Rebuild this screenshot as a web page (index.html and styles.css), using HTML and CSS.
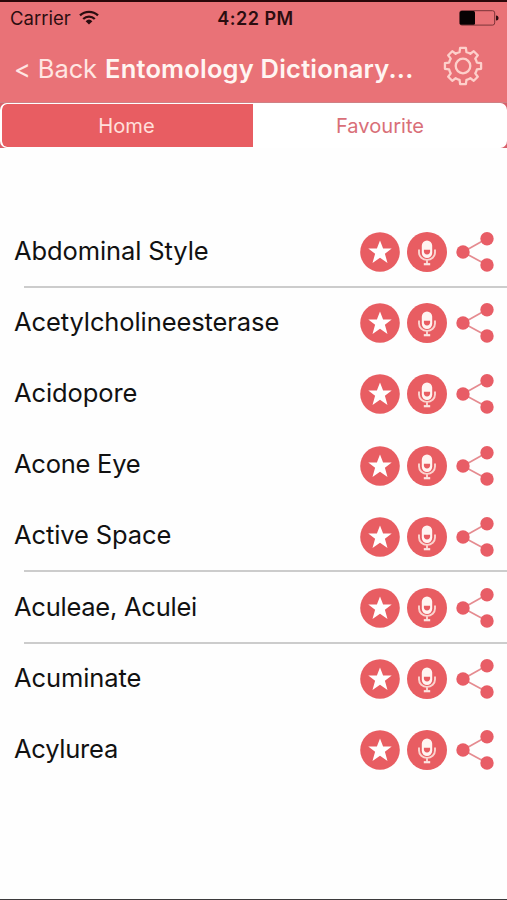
FILE: index.html
```
<!DOCTYPE html>
<html lang="en">
<head>
<meta charset="utf-8">
<title>Entomology Dictionary</title>
<link rel="stylesheet" href="styles.css">
</head>
<body>
<svg class="sprite" aria-hidden="true">
  <symbol id="star" viewBox="0 0 40 40">
    <circle cx="20" cy="20" r="19.8" fill="#e85d62"/>
    <path d="M20 8.6l3.100 8h8.600l-6.800 5.200 2.600 9.200-7.500-5.300-7.500 5.300 2.600-9.200-6.800-5.200h8.600z" fill="#fff"/>
  </symbol>
  <symbol id="mic" viewBox="0 0 40 40">
    <circle cx="20" cy="20" r="20" fill="#e85d62"/>
    <rect x="14.8" y="8.5" width="10.4" height="17.500" rx="5.2" fill="#fff4f1"/>
    <path d="M16.900 17.800h6.200v1.500a3.100 3.100 0 0 1-6.200 0z" fill="#e85d62"/>
    <path d="M12 17.500v3a8 7.400 0 0 0 16 0v-3M20 27.7v4" fill="none" stroke="#fbd5d0" stroke-width="1.9"/>
    <path d="M16.800 32.200h6.400" stroke="#fbe5e1" stroke-width="2.200"/>
  </symbol>
  <symbol id="share" viewBox="0 0 40 42">
    <path d="M31 7.5L7 21l24 13" fill="none" stroke="#e58b90" stroke-width="1.7"/>
    <circle cx="31" cy="7.7" r="6.7" fill="#e85d66"/>
    <circle cx="7" cy="21" r="6.7" fill="#e85d66"/>
    <circle cx="31" cy="34" r="6.7" fill="#e85d66"/>
  </symbol>
</svg>
<div class="screen">
  <header class="header">
    <div class="status">
      <div class="carrier"><span>Carrier</span>
        <svg class="wifi" viewBox="0 0 20 15"><g fill="none" stroke="#2b0d10" stroke-width="2.3"><path d="M1 5.4a13 13 0 0 1 18 0"/><path d="M4.2 9a8.3 8.3 0 0 1 11.6 0"/></g><path d="M6.6 11.2a5 5 0 0 1 6.8 0L10 14.6z" fill="#2b0d10"/></svg>
      </div>
      <div class="time">4:22 PM</div>
      <svg class="battery" viewBox="0 0 40 16"><rect x=".7" y=".7" width="35" height="14.4" rx="2.2" fill="none" stroke="#7b3438" stroke-width="1"/><rect x=".8" y="1" width="15.2" height="13.8" rx="1.5" fill="#080203"/><path d="M37 5.5q2.5 0 2.5 2.5T37 10.5z" fill="#2b0d10"/></svg>
    </div>
    <nav class="nav">
      <span class="back">&lt; Back</span>
      <h1 class="title">Entomology Dictionary...</h1>
      <svg class="gear" viewBox="-20 -20 40 40" fill="none" stroke="#fdd0cb" stroke-width="2.3" stroke-linejoin="round"><path d="M-2.86-18.07H2.86L3.46-13.88Q5.5-13.4 7.37-12.26L10.76-14.8L14.8-10.76L12.26-7.37Q13.4-5.5 13.88-3.46L18.07-2.86V2.86L13.88 3.46Q13.4 5.5 12.26 7.37L14.8 10.76L10.76 14.8L7.37 12.26Q5.5 13.4 3.46 13.88L2.86 18.07H-2.86L-3.46 13.88Q-5.5 13.4-7.37 12.26L-10.76 14.8L-14.8 10.76L-12.26 7.37Q-13.4 5.5-13.88 3.46L-18.07 2.86V-2.86L-13.88-3.46Q-13.4-5.5-12.26-7.37L-14.8-10.76L-10.76-14.8L-7.37-12.26Q-5.5-13.4-3.46-13.88Z"/><circle r="7.3"/></svg>
    </nav>
  </header>
  <div class="tabs-wrap">
    <div class="tabs">
      <div class="tab active">Home</div>
      <div class="tab">Favourite</div>
    </div>
  </div>
  <ul class="list">
    <li class="row line"><span class="word">Abdominal Style</span><svg class="round"><use href="#star"/></svg><svg class="round"><use href="#mic"/></svg><svg class="share"><use href="#share"/></svg></li>
    <li class="row"><span class="word">Acetylcholineesterase</span><svg class="round"><use href="#star"/></svg><svg class="round"><use href="#mic"/></svg><svg class="share"><use href="#share"/></svg></li>
    <li class="row"><span class="word">Acidopore</span><svg class="round"><use href="#star"/></svg><svg class="round"><use href="#mic"/></svg><svg class="share"><use href="#share"/></svg></li>
    <li class="row"><span class="word tight">Acone Eye</span><svg class="round"><use href="#star"/></svg><svg class="round"><use href="#mic"/></svg><svg class="share"><use href="#share"/></svg></li>
    <li class="row line"><span class="word">Active Space</span><svg class="round"><use href="#star"/></svg><svg class="round"><use href="#mic"/></svg><svg class="share"><use href="#share"/></svg></li>
    <li class="row line"><span class="word tight">Aculeae, Aculei</span><svg class="round"><use href="#star"/></svg><svg class="round"><use href="#mic"/></svg><svg class="share"><use href="#share"/></svg></li>
    <li class="row"><span class="word">Acuminate</span><svg class="round"><use href="#star"/></svg><svg class="round"><use href="#mic"/></svg><svg class="share"><use href="#share"/></svg></li>
    <li class="row"><span class="word tight">Acylurea</span><svg class="round"><use href="#star"/></svg><svg class="round"><use href="#mic"/></svg><svg class="share"><use href="#share"/></svg></li>
  </ul>
</div>
</body>
</html>
```
FILE: styles.css
```
* { box-sizing: border-box; }
body { margin: 0; background: #fefefe; font-family: Inter, "Liberation Sans", sans-serif; }
.sprite { position: absolute; width: 0; height: 0; }
.screen { width: 507px; height: 900px; overflow: hidden; border-bottom: 1px solid #3c3a3c; background: #fefefe; }
.header { height: 102px; background: #e97277; border-top: 2px solid #2a0709; }
.status { height: 33px; display: grid; grid-template-columns: 1fr auto 1fr; align-items: center; padding: 0 8px 0 10px; font-size: 18.5px; color: #2b0d10; }
.carrier { display: flex; align-items: center; gap: 8px; margin-top: -2px; }
.wifi { width: 20px; height: 15px; margin-top: -1px; }
.time { font-weight: 600; font-size: 18px; letter-spacing: .5px; margin: -1px 0 0 2px; }
.battery { width: 40px; height: 16px; justify-self: end; margin-top: -1px; }
.nav { height: 67px; display: flex; align-items: center; padding: 0 24px 0 14px; color: #fff5f2; white-space: nowrap; }
.back { width: 91px; font-size: 25.5px; letter-spacing: -.1px; color: #ffe6e2; margin-top: -1px; }
.title { margin: -1px 0 0; flex: 1; font-size: 25.5px; font-weight: 600; letter-spacing: .2px; }
.gear { width: 40px; height: 40px; margin-top: -5px; }
.tabs-wrap { height: 46px; background: #d8606a; border-top: 1px solid #cf8084; }
.tabs { height: 45px; display: flex; border: 1px solid #fff; border-width: 1px 2px; border-radius: 7px; background: #fff; overflow: hidden; }
.tab { flex: 1; display: flex; align-items: center; justify-content: center; font-size: 20.1px; color: #d96f78; padding-left: 2px; }
.tab.active { flex: 0 0 251px; background: #e85d62; color: #ffe0dc; border-radius: 5px 0 0 5px; padding: 0 2px 0 0; }
.list { list-style: none; margin: 0; padding: 68.5px 0 0; }
.row { height: 71.2px; display: flex; align-items: center; gap: 7px; padding: 0 11px 0 14px; background-repeat: no-repeat; }
.line { background-image: linear-gradient(#ccc, #ccc); background-size: 100% 2px; background-position: 24px 100%; }
.word { flex: 1; font-size: 25.5px; letter-spacing: -.1px; color: #111; white-space: nowrap; margin-top: -4px; }
.tight { letter-spacing: -.25px; }
.round { width: 40px; height: 40px; }
.share { width: 40px; height: 42px; margin-left: 2px; }
```
